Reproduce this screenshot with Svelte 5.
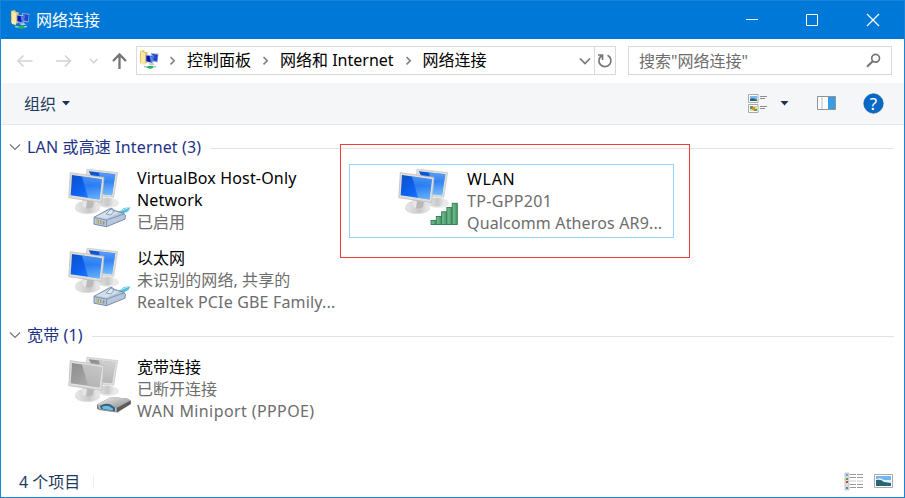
<script>
  const groups = [
    {
      title: 'LAN 或高速 Internet (3)',
      items: [
        { kind: 'lan', lines: [['VirtualBox Host-Only', 0.16], ['Network', 0.2]], info: [['已启用', 0]] },
        { kind: 'wifi', lines: [['WLAN', 0.7]], info: [['TP-GPP201', 0.33], ['Qualcomm Atheros AR9...', 0.15]], selected: true },
        { kind: 'lan', lines: [['以太网', 0]], info: [['未识别的网络, 共享的', 0.08], ['Realtek PCIe GBE Family...', 0.17]] }
      ]
    },
    {
      title: '宽带 (1)',
      items: [{ kind: 'wan', lines: [['宽带连接', 0]], info: [['已断开连接', 0], ['WAN Miniport (PPPOE)', 0.4]] }]
    }
  ];
  const bars = [[41, 60.5], [46.3, 56.5], [51.6, 51.8], [56.9, 47.5], [62.2, 43.3]];
</script>

<svg width="0" height="0" class="defs">
  <defs>
    <linearGradient id="blue" x1="0" y1="0" x2="1" y2="1"><stop offset="0" stop-color="#0c50c8" /><stop offset=".5" stop-color="#0c62f2" /><stop offset="1" stop-color="#2e8cff" /></linearGradient>
    <linearGradient id="shine" x1="0" y1="0" x2="0" y2="1"><stop offset="0" stop-color="#75b4f8" /><stop offset=".4" stop-color="#3e8cf5" /><stop offset="1" stop-color="#8fd0ff" /></linearGradient>
    <linearGradient id="gray" x1="0" y1="0" x2="1" y2="1"><stop offset="0" stop-color="#8c8c8c" /><stop offset="1" stop-color="#b4b4b4" /></linearGradient>
    <linearGradient id="grayShine" x1="0" y1="0" x2="0" y2="1"><stop offset="0" stop-color="#e2e2e2" /><stop offset="1" stop-color="#b8b8b8" /></linearGradient>
    <linearGradient id="base" x1="0" y1="0" x2="1" y2="0"><stop offset="0" stop-color="#e8e8e8" /><stop offset=".6" stop-color="#c8c8c8" /><stop offset="1" stop-color="#eee" /></linearGradient>
    <linearGradient id="green" x1="0" y1="0" x2="1" y2="0"><stop offset="0" stop-color="#7cc195" /><stop offset="1" stop-color="#45996a" /></linearGradient>
    <linearGradient id="metal" x1="0" y1="0" x2="1" y2="1"><stop offset="0" stop-color="#f4f4f4" /><stop offset="1" stop-color="#888" /></linearGradient>
  </defs>
</svg>

{#snippet folder()}
  <svg class="folder" width="22" height="22" viewBox="0 0 22 22">
    <path d="M2 2l4-1 1 2 2.500 0v11l-4 1-3.500-1z" fill="#e3c469" /><path d="M3 2l4 2v12l-4-1z" fill="#fbe9a4" />
    <path d="M13 4l7.500.8-1 8.700-6.500-1z" fill="#8fa9d4" /><path d="M14 5l5.700.8-.7 6.500-5-1z" fill="#1f46c8" />
    <path d="M7.500 5.500l8 1-.8 8-7-1.800z" fill="#b4c4e4" /><path d="M8.300 6.400l6.500.9-.7 6.200-5.800-1.300z" fill="#0719a8" /><path d="M11.500 7l3.300.4-.7 6-1.400-.3z" fill="#527ff4" />
    <path d="M10 14.500l5-.5 2 1.500-4 1z" fill="#b8c5ce" /><path d="M6 17.500l5 .8 7-.8" stroke="#a8c4bc" stroke-width="1.600" fill="none" /><path d="M10 17l5 0v2l-3 1-3-1.500z" fill="#21b958" />
  </svg>
{/snippet}

{#snippet crumbArrow()}
  <svg class="crumb" width="8" height="10" viewBox="0 0 8 10"><path d="M2.500 1l3.700 3.700-3.700 3.700" fill="none" stroke="#808080" stroke-width="1.600" /></svg>
{/snippet}

{#snippet device(kind)}
  {@const off = kind === 'wan'}
  <svg class="device" width="66" height="64" viewBox="6 6 66 64">
    <ellipse cx="48" cy="43" rx="11" ry="5" fill="#dadada" opacity=".6" />
    <ellipse cx="46" cy="42" rx="9" ry="4.500" fill="url(#base)" />
    <path d="M27 9.200L57.600 12.600 53.700 37.300 42 36.200 25 30z" fill="#dfdfdd" stroke="#c6c6c4" stroke-width=".7" />
    <path d="M28.800 11.300L55.300 14.300 52 35.200 40 33.700z" fill={off ? 'url(#gray)' : 'url(#blue)'} />
    <path d="M39 12.500l16.300 1.800L52 35.200l-9-1z" fill={off ? 'url(#grayShine)' : 'url(#shine)'} opacity=".75" />
    <ellipse cx="27.500" cy="48.500" rx="12.500" ry="5.500" fill="#ccc" opacity=".5" />
    <ellipse cx="27.300" cy="47" rx="11.800" ry="6.300" fill="url(#base)" stroke="#d4d4d4" stroke-width=".5" />
    <path d="M22 39l12 2-1 6q-5 3-9 0z" fill="#b9b9b9" /><path d="M22 40l5 1-1 7-3-1z" fill="#e6e6e6" />
    <path d="M10.300 12.700L44 17.400 41.700 42.500 8.800 37.700z" fill="#dededc" stroke="#bdbdbb" stroke-width=".8" />
    <path d="M12 15L41.900 19.300 39.500 39.400 10.700 35.300z" fill={off ? 'url(#gray)' : 'url(#blue)'} />
    <path d="M22 16.500L41.900 19.300 39.500 39.400 28 37.800z" fill={off ? 'url(#grayShine)' : 'url(#shine)'} opacity=".6" />
    {#if kind === 'lan'}
      <path d="M57 53l7-5 6.500-1-2 4-8 4z" fill="#58bce0" /><path d="M60 51l10-4" stroke="#b8eef8" stroke-width="1" />
      <path d="M34 57.300L49 49l3-.8 2 2 9 3 2.500 2-.5 4-18.500 7.500-12.500-2.500z" fill="#b8c8dc" stroke="#71859f" stroke-width=".9" />
      <path d="M34 57.500l12.500 2.600 18-6.300M46.500 60v6.500" fill="none" stroke="#7187a7" stroke-width=".8" />
      <path d="M36 56.800l13-6.500 10 2.400-12.300 5.800z" fill="#d3e0ec" /><path d="M46 54l5-5 3 2-3 4z" fill="#dce8f4" stroke="#7187a7" stroke-width=".7" />
      <path d="M36 59.500l8.500 2v3.200L36 63z" fill="#8793a2" /><path d="M37 60v3M39.500 60.500v3M42 61v3" stroke="#e4dc78" stroke-width="1.200" />
    {:else if kind === 'wifi'}
      {#each bars as [x, y]}<rect {x} {y} width="5.100" height={64.5 - y} fill="url(#green)" stroke="#317b50" stroke-width=".9" />{/each}
    {:else}
      <path d="M37 56.500L51 49l16 1.600 3.700 2v3.400L57 64.500 39 62l-2-1.500z" fill="#777" />
      <path d="M37 56.500L51 49l16 1.600 3.700 2L56.800 60z" fill="url(#metal)" />
      <path d="M37.500 57l19 3v3.800l-17-2.400z" fill="#b5bdc2" /><path d="M40 58q8-5.500 15 2v3.200l-14-2z" fill="#35627f" /><path d="M42 58.800q6-3 11 2v1.600l-10-1.500z" fill="#70bce0" />
      <path d="M57 60l13.700-7.400V56L57 64.500z" fill="#5c5c5c" />
    {/if}
  </svg>
{/snippet}

<div class="window">
  <header class="title">
    {@render folder()}<span>网络连接</span>
    <svg class="controls" width="180" height="38" viewBox="724 1 180 38" fill="none" stroke="#fff">
      <path d="M746 19.500h12" />
      <path d="M806.500 14.500h11v11h-11z" />
      <path d="M867 14l12 12M879 14l-12 12" stroke-width="1.200" />
    </svg>
  </header>

  <nav class="nav">
    <svg class="arrows" width="135" height="44" viewBox="1 39 135 44" fill="none">
      <path d="M32.500 61H18M23.500 55.500L18 61l5.500 5.500M56 61h14.500M65 55.500l5.500 5.500-5.500 5.500" stroke="#d2d2d2" stroke-width="1.500" />
      <path d="M90 59l3.700 3.700L97.400 59" stroke="#cfcfcf" stroke-width="1.500" />
      <path d="M119.500 69V55M113 61l6.500-6.500L126 61" stroke="#757575" stroke-width="2.300" />
    </svg>
    <div class="address">
      {@render folder()}
      {@render crumbArrow()}<span>控制面板</span>
      {@render crumbArrow()}<span>网络和 Internet</span>
      {@render crumbArrow()}<span>网络连接</span>
      <svg class="drop" width="12" height="8" viewBox="0 0 12 8"><path d="M1 1.500l5 5 5-5" stroke="#777" stroke-width="1.700" fill="none" /></svg>
      <div class="refresh"><svg width="16" height="18" viewBox="0 0 16 18"><path d="M10.500 3.200a6 6 0 1 1-5.500.2M5.500 8V3H1" stroke="#777" stroke-width="1.700" fill="none" /></svg></div>
    </div>
    <div class="search"><span>搜索"网络连接"</span>
      <svg width="15" height="15" viewBox="0 0 15 15"><circle cx="9.600" cy="5.300" r="3.900" stroke="#757575" stroke-width="1.700" fill="none" /><path d="M6.700 8.200L1 13.800" stroke="#757575" stroke-width="2" /></svg>
    </div>
  </nav>

  <div class="toolbar">
    <span>组织</span>
    <svg width="8" height="5" viewBox="0 0 8 5"><path d="M0 0h8L4 4.500z" fill="#1b3358" /></svg>
    <svg class="tools" width="160" height="41" viewBox="744 83 160 41">
      <path d="M748.500 94.500h9.500v8h-9.500zM748.500 104.500h9.500v8h-9.500z" stroke="#aaa" fill="#fff" />
      <path d="M750 96h7v5h-7z" fill="#7db9eb" /><path d="M750 99q3-2 7 1v1h-7z" fill="#28616f" />
      <path d="M750 106h7v5h-7z" fill="#d8dda0" /><path d="M750 106h3v3h-3zM754 109h3v2h-3z" fill="#5b9b51" /><path d="M752 107h3v3h-3z" fill="#e68a2c" />
      <path d="M760 96.500h7M760 98.500h5M760 106.500h7M760 108.500h5" stroke="#8d8d8d" />
      <path d="M780.500 101h8l-4 4.500z" fill="#1b3358" />
      <path d="M817.500 96.500h18v13h-18z" fill="#fff" stroke="#8f9499" /><path d="M828 97h7v12h-7z" fill="#3c9be5" /><path d="M822 97v12" stroke="#bbb" />
      <circle cx="873.500" cy="103.500" r="9.700" fill="#0868c6" stroke="#07569f" stroke-width=".7" />
      <text x="873.500" y="109.500" text-anchor="middle" font-size="17" fill="#fff">?</text>
    </svg>
  </div>

  <main>
    {#each groups as group}
      <section>
        <h2><svg width="12" height="8" viewBox="0 0 12 8"><path d="M1 1.500l5 5 5-5" stroke="#777" fill="none" stroke-width="1.200" /></svg><span>{group.title}</span></h2>
        <div class="grid">
          {#each group.items as item}
            <article class:selected={item.selected}>
              {@render device(item.kind)}
              <div class="text">
                {#each item.lines as [line, spacing]}<p class:tight={item.lines.length > 1} style:letter-spacing="{spacing}px">{line}</p>{/each}
                {#each item.info as [line, spacing]}<p class="info" style:letter-spacing="{spacing}px">{line}</p>{/each}
              </div>
            </article>
          {/each}
        </div>
      </section>
    {/each}
    <div class="marker"></div>
  </main>

  <footer>
    <span>4 个项目</span><b></b>
    <svg width="50" height="20" viewBox="845 472 50 20">
      <path d="M846 473h4v17h-4z" fill="#ddd" stroke="#bbb" stroke-width=".8" />
      <path d="M847 474h2v2h-2z" fill="#64a9dd" /><path d="M847 478h2v2h-2z" fill="#6b9a48" /><path d="M847 481h2v2h-2z" fill="#bd4b38" /><path d="M847 487h2v2h-2z" fill="#5686b8" />
      <path d="M851 474.500h6m1 0h6M851 477.500h6m1 0h6M851 484.500h6m1 0h6M851 487.500h6m1 0h6" stroke="#999" />
      <path d="M851 481h6m1 0h6" stroke="#ccc" />
      <path d="M875.500 474.500h18v13h-18z" fill="#fff" stroke="#aaa" /><path d="M877 476h15v10h-15z" fill="#73b5f0" /><path d="M877 479q5-2 8 1l7 0v3h-15z" fill="#d8effc" /><path d="M877 480q5-1 8 2l7 1v3h-15z" fill="#286377" />
    </svg>
  </footer>
</div>

<style>
  .defs { position: absolute; }
  .window { box-sizing: border-box; width: 905px; height: 498px; border: 1px solid #1883d7; background: #fff; display: flex; flex-direction: column; font: 16px/22px "Noto Sans", "Noto Sans CJK SC", sans-serif; color: #000; overflow: hidden; }
  svg { flex: none; display: block; }
  .title { height: 38px; flex: none; background: #0078d7; color: #fff; display: flex; align-items: center; padding-left: 8px; }
  .title span { margin-left: 5px; }
  .controls { margin-left: auto; }
  .nav { height: 44px; flex: none; display: flex; align-items: center; }
  .address, .search { height: 29px; box-sizing: border-box; border: 1px solid #d9d9d9; display: flex; align-items: center; margin-top: -1px; }
  .address { width: 480px; padding-left: 1px; white-space: nowrap; }
  .address span { padding-bottom: 2px; }
  .address .folder { margin: 0 -2px 2px 0; }
  .crumb { margin: 0 11px 0 10px; }
  .drop { margin-left: auto; }
  .refresh { height: 27px; width: 20px; margin-left: 3px; border-left: 1px solid #d9d9d9; display: flex; align-items: center; justify-content: center; }
  .search { width: 264px; margin-left: 12px; padding: 0 10px; color: #6d6d6d; justify-content: space-between; }
  .toolbar { height: 41px; flex: none; background: #f5f6f7; border-bottom: 1px solid #e8e8e8; display: flex; align-items: center; padding-left: 23px; color: #1e395b; }
  .toolbar > span { margin-right: 6px; }
  .tools { margin-left: auto; }
  main { position: relative; flex: 1; min-height: 0; padding-top: 11px; }
  h2 { margin: 0; font: inherit; color: #1e3287; height: 22px; display: flex; align-items: center; padding: 0 10px 0 8px; letter-spacing: .14px; }
  h2 span { margin: 0 9px 0 6px; }
  h2::after { content: ""; flex: 1; height: 1px; background: #e2e2e2; margin-top: 2px; }
  section + section { margin-top: 7px; }
  .grid { display: grid; grid-template-columns: 325px 325px; gap: 5px; padding: 6px 0 0 18px; }
  article { box-sizing: border-box; height: 74px; border: 1px solid transparent; padding: 1px 0 0 46px; display: flex; }
  .selected { border-color: #99d1ff; }
  .text { margin: 2px 0 0 5px; white-space: nowrap; }
  p { margin: 0; }
  .tight { line-height: 21.500px; }
  .info { color: #6d6d6d; }
  .marker { position: absolute; left: 339px; top: 19px; width: 348px; height: 112px; border: 1px solid #f33b3b; }
  footer { height: 30px; flex: none; display: flex; align-items: center; padding: 0 10px 0 18px; color: #1e395b; }
  footer b { width: 1px; height: 14px; background: #eee; margin-left: 13px; }
  footer svg { margin-left: auto; }
</style>
